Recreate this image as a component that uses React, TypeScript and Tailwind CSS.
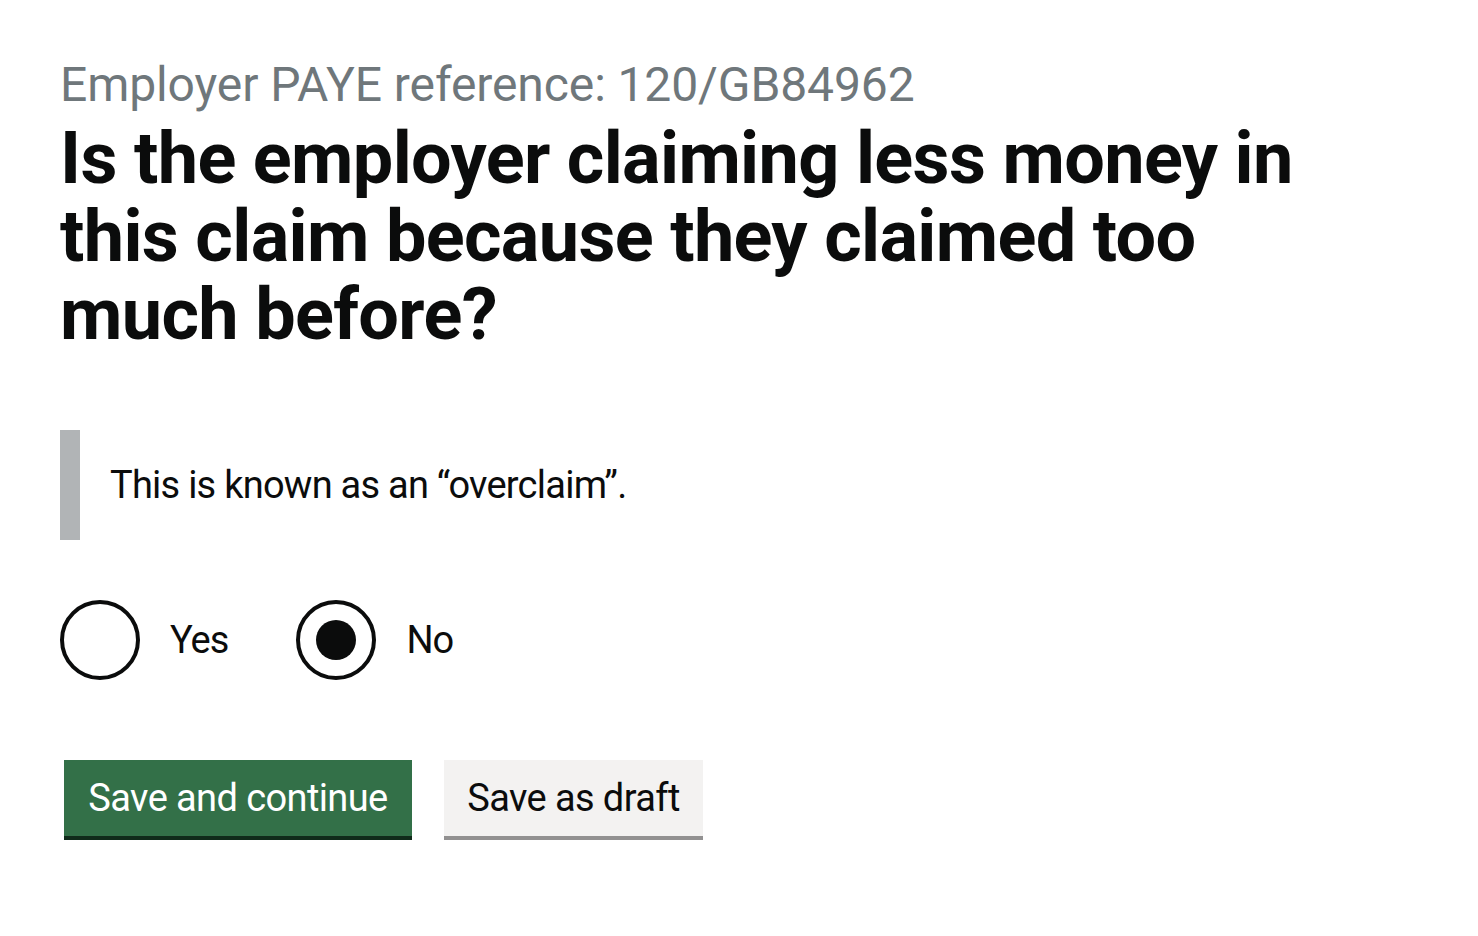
import { useState } from "react"

const font = "font-['Roboto',sans-serif]"

const Radio = ({ label, checked, onSelect }: { label: string; checked: boolean; onSelect: () => void }) => (
    <label className="flex items-center mr-[40px] cursor-pointer" onClick={onSelect}>
        <span className="flex size-[80px] shrink-0 items-center justify-center rounded-full border-[4px] border-[#0b0c0c] bg-white">
            {checked && <span className="size-[40px] rounded-full bg-[#0b0c0c]" />}
        </span>
        <span className="pl-[30px] pr-[28px] text-[38px] leading-[50px] tracking-[-1px] text-[#0b0c0c]">{label}</span>
    </label>
)

export default function App() {
    const [answer, setAnswer] = useState<"yes" | "no">("no")

    return (
        <div className={`min-h-screen bg-white px-[60px] pt-[55px] ${font}`}>
            <span className="block text-[48px] leading-[60px] tracking-[-0.1px] text-[#6f777b]">
                Employer PAYE reference: 120/GB84962
            </span>
            <h1 className="mt-[5px] max-w-[1260px] text-[72px] font-bold leading-[78px] tracking-[-0.65px] text-[#0b0c0c]">
                Is the employer claiming less money in this claim because they claimed too much before?
            </h1>

            <div className="mt-[76px] border-l-[20px] border-[#b1b4b6] py-[30px] pl-[30px] text-[38px] leading-[50px] tracking-[-0.75px] text-[#0b0c0c]">
                This is known as an “overclaim”.
            </div>

            <div className="mt-[60px] flex">
                <Radio label="Yes" checked={answer === "yes"} onSelect={() => setAnswer("yes")} />
                <Radio label="No" checked={answer === "no"} onSelect={() => setAnswer("no")} />
            </div>

            <div className="mt-[80px] ml-[4px] flex gap-[32px]">
                <button className="h-[80px] w-[348px] bg-[#337048] pb-[4px] text-[38px] leading-none tracking-[-0.6px] text-white shadow-[0_-4px_0_#102b1a_inset]">
                    Save and continue
                </button>
                <button className="h-[80px] w-[259px] bg-[#f3f2f1] pb-[4px] text-[38px] leading-none tracking-[-0.6px] text-[#0b0c0c] shadow-[0_-4px_0_#929191_inset]">
                    Save as draft
                </button>
            </div>
        </div>
    )
}
